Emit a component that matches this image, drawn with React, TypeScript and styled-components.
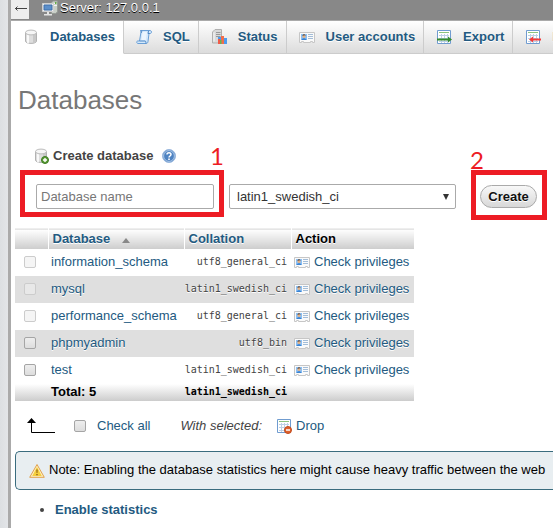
import React from "react";
import styled, { createGlobalStyle, css } from "styled-components";

const GlobalStyle = createGlobalStyle`
  * { box-sizing: border-box; }
  html, body { margin: 0; background: #fff; }
  body {
    font-family: "Liberation Sans", Arial, sans-serif;
    font-size: 13px;
    line-height: 16px;
    color: #444;
    overflow: hidden;
  }
  a { color: #235a81; text-decoration: none; }
  a:hover { text-decoration: underline; }
`;

const raised = css`
  text-shadow: 0 1px 0 #fff;
`;

const Page = styled.div`
  display: flex;
  min-height: 100vh;
`;

const NavPanel = styled.aside`
  flex: none;
  width: 11px;
  background: linear-gradient(to right, #dcdfe2, #e3e5e8);
  border-right: 3px solid #aaa;
`;

const Main = styled.main`
  flex: 1;
  min-width: 0;
  overflow: hidden;
`;

const ServerBar = styled.header`
  display: flex;
  align-items: flex-start;
  height: 20px;
  background: #888;
  color: #fff;
  text-shadow: 0 1px 0 #000;
`;

const BackButton = styled.button`
  width: 18px;
  height: 19px;
  margin-right: 13px;
  padding: 0 0 2px 2px;
  border: 0;
  background: #eee;
  line-height: 0;
`;

const ServerName = styled.span`
  display: flex;
  gap: 2px;
`;

const Tabs = styled.nav`
  display: flex;
  border-top: 1px solid #aaa;
`;

const Tab = styled.a<{ $active?: boolean }>`
  flex: none;
  display: flex;
  align-items: center;
  gap: 11px;
  height: 33px;
  padding: 0 8px 0 12px;
  border-right: 1px solid #ccc;
  border-bottom: 1px solid ${(p) => (p.$active ? "#fff" : "#ccc")};
  background: ${(p) => (p.$active ? "#fff" : "linear-gradient(#fff, #dcdcdc)")};
  font-weight: bold;
  white-space: nowrap;
  ${raised}
`;

const Title = styled.h1`
  margin: 30px 0 0 7px;
  font-size: 26px;
  line-height: 32px;
  font-weight: normal;
  color: #777;
  ${raised}
`;

const CreateForm = styled.form`
  margin: 32px 0 0 22px;
`;

const FormHeading = styled.div`
  display: flex;
  align-items: center;
  gap: 4px;
  height: 16px;
  font-weight: bold;
`;

const HeadingLabel = styled.label`
  margin-right: 4px;
`;

const HelpLink = styled.a`
  height: 16px;
`;

const FormRow = styled.div`
  display: flex;
  align-items: center;
  margin-top: 20px;
  padding-left: 3px;
`;

const Marked = styled.div`
  position: relative;
  display: flex;
`;

const Marker = styled.span<{ $wide?: boolean }>`
  position: absolute;
  inset: ${(p) => (p.$wide ? "-14px -10px -8px -16px" : "-15px -10px -12px -9px")};
  border: 5px solid #ed1c24;
  pointer-events: none;
`;

const MarkerNumber = styled.span<{ $wide?: boolean }>`
  position: absolute;
  ${(p) => (p.$wide ? "right: -10px; top: -42px;" : "left: -10px; top: -39px;")}
  font-family: Lato, sans-serif;
  font-size: 24px;
  line-height: 28px;
  color: #ed1c24;
  pointer-events: none;
`;

const NameInput = styled.input`
  width: 178px;
  height: 25px;
  padding: 0 4px;
  border: 1px solid #aaa;
  border-radius: 2px;
  background: #fff;
  font: inherit;
  color: #333;
  &::placeholder { color: #777; opacity: 1; }
`;

const SelectWrap = styled.div`
  display: grid;
  align-items: center;
  width: 227px;
  margin: 0 24px 0 15px;
`;

const CollationSelect = styled.select`
  grid-area: 1 / 1;
  height: 25px;
  padding: 0 7px;
  border: 1px solid #aaa;
  border-radius: 2px;
  appearance: none;
  background: #fff;
  font: inherit;
  color: #333;
`;

const SelectArrow = styled.svg`
  grid-area: 1 / 1;
  justify-self: end;
  margin-right: 7px;
  pointer-events: none;
`;

const CreateButton = styled.button`
  width: 57px;
  height: 23px;
  padding: 0;
  border: 1px solid #aaa;
  border-radius: 12px;
  background: linear-gradient(#f8f8f8, #d8d8d8);
  font: inherit;
  font-weight: bold;
  color: #111;
  ${raised}
`;

const DatabaseTable = styled.table`
  width: 399px;
  margin: 19px 0 0 4px;
  border-collapse: collapse;
  table-layout: fixed;
`;

const Col = styled.col<{ $width: number }>`
  width: ${(p) => p.$width}px;
`;

const HeadCell = styled.th`
  height: 20px;
  padding: 0 4px;
  border-top: 1px solid #eee;
  border-right: 1px solid #fff;
  background: linear-gradient(#fff, #ccc);
  color: #000;
  text-align: left;
  ${raised}
  &:last-child { border-right: 0; }
`;

const SortMark = styled.svg`
  margin-left: 8px;
`;

const codeText = css`
  padding: 0 4px 0 0;
  text-align: right;
  font-family: "DejaVu Sans Mono", Consolas, monospace;
  font-size: 10px;
`;

const Row = styled.tr`
  &:nth-child(even) { background: #dfdfdf; }
`;

const Cell = styled.td<{ $kind?: "check" | "code" | "action" }>`
  height: 27px;
  padding: 0 3px;
  white-space: nowrap;
  ${raised}
  ${(p) => p.$kind === "check" && "padding-left: 9px; line-height: 0;"}
  ${(p) => p.$kind === "code" && codeText}
`;

const ActionLink = styled.a`
  display: flex;
  align-items: center;
  gap: 4px;
`;

const TotalRow = styled.tr`
  background: linear-gradient(#fff, #ccc);
`;

const TotalCell = styled.th<{ $code?: boolean }>`
  height: 17px;
  padding: 0 3px;
  color: #000;
  text-align: left;
  white-space: nowrap;
  ${(p) => p.$code && codeText}
`;

const Check = styled.input`
  appearance: none;
  width: 12px;
  height: 12px;
  margin: 0;
  border: 1px solid #a5a5a5;
  border-radius: 2px;
  background: linear-gradient(#eee, #ddd);
  &:checked { background: #235a81; }
  &:disabled { border-color: #ccc; background: #eeeeee99; }
`;

const BulkActions = styled.div`
  display: flex;
  align-items: center;
  height: 20px;
  margin: 15px 0 0 16px;
`;

const CheckAll = styled.label`
  display: flex;
  align-items: center;
  gap: 11px;
  margin: 0 30px 0 19px;
  color: #235a81;
`;

const DropLink = styled.a`
  display: flex;
  align-items: center;
  gap: 4px;
  margin-left: 14px;
`;

const Notice = styled.div`
  display: flex;
  align-items: center;
  gap: 4px;
  height: 39px;
  margin: 15px 0 0 4px;
  padding-left: 13px;
  border: 1px solid #3a6c7e;
  border-right: 0;
  border-radius: 5px 0 0 5px;
  background: #e8eef1;
  color: #000;
  white-space: nowrap;
`;

const StatList = styled.ul`
  margin: 12px 0 0;
  padding-left: 44px;
  font-weight: bold;
`;

const IconSvg = styled.svg`
  flex: none;
  width: 16px;
  height: 16px;
`;

const Icon = ({ children }: { children: React.ReactNode }) => (
  <IconSvg viewBox="0 0 16 16" fill="none" aria-hidden="true">{children}</IconSvg>
);

const Cylinder = () => (
  <>
    <path d="M2.5 3.5v8.5c0 3.2 11 3.2 11 0V3.5" fill="#dedede" stroke="#b2b2b2" />
    <path d="M4 5v9l2 .5v-9z" fill="#fff" opacity=".8" />
    <path d="M10 5.500V14.300l3-1.300V4.500z" fill="#c8c8c8" />
    <ellipse cx="8" cy="3.500" rx="5.500" ry="2.400" fill="#f6f6f6" stroke="#bcbcbc" />
  </>
);

const DatabaseIcon = () => <Icon><Cylinder /></Icon>;

const NewDatabaseIcon = () => (
  <Icon>
    <Cylinder />
    <circle cx="12" cy="12" r="3.5" fill="#5b9b37" stroke="#3c7c20" />
    <path d="M12 10v4M10 12h4" stroke="#fff" strokeWidth="1.4" />
  </Icon>
);

const ServerIcon = () => (
  <Icon>
    <path d="M9.500 2.500l2-1.500h4v11l-2 1.500h-4z" fill="#c8cec7" stroke="#979c96" />
    <path d="M12 3.500h3M12 5.500h3" stroke="#f2f4f1" />
    <path d="M13 2h1.500v2H13z" fill="#60aa44" />
    <path d="M.5 3.500h11v8H.5z" fill="#efefef" stroke="#d0d0d0" />
    <path d="M2 5h8v5H2z" fill="#5c8fca" stroke="#3f6fa8" />
    <path d="M5 12h2v2h3v1.500H2V14h3z" fill="#e4e4e4" />
  </Icon>
);

const SqlIcon = () => (
  <Icon>
    <path d="M4.500 1.500h9.500c2 0 1.800 3 .3 3h-1.300l-1 8c-.2 1.500-1 2-2 2H2c-1.500 0-2-2.500 0-2.500h1.500L5 3z" fill="#d3e8fb" stroke="#6a9fd6" />
    <path d="M5 1.500c1 .5.8 2 0 2.500M3.500 12H9c1 0 1 2 1 2.500M13.500 4.500h-1.500l.5-2.500" stroke="#4c86c4" />
    <path d="M6.500 3h4.500l-1.200 8H5.500z" fill="#f1f8ff" opacity=".8" />
  </Icon>
);

const StatusIcon = () => (
  <Icon>
    <path d="M1.500 3l2.500-2.500h6.500v11L8 14H1.500z" fill="#dadada" stroke="#b0b0b0" />
    <path d="M5 3.500h4.500M5 5.500h4.500M5 7.500h4.500" stroke="#999" />
    <path d="M3 3.500v9" stroke="#f8f8f8" />
    <path d="M7 8h3v7H7z" fill="#4b9cf0" />
    <path d="M7 10h2v5H7z" fill="#f05b48" />
    <path d="M10 7h3v8h-3z" fill="#f26d4c" />
    <path d="M13 9h3v6h-3z" fill="#4b9cf0" />
    <path d="M9 11h1.500v4H9z" fill="#63b456" />
  </Icon>
);

const AccountIcon = () => (
  <Icon>
    <path d="M.5 3.500h15v10H13.500v-1h-2v1h-7v-1h-2v1H.5z" fill="#fafafa" stroke="#c6c6c6" />
    <path d="M2 5h6v6H2z" fill="#8cc0f4" />
    <circle cx="5" cy="7.500" r="1.500" fill="#e2b184" />
    <path d="M3.500 7c-.2-2.500 3.200-2.500 3 0L5.500 6.200z" fill="#6a4a34" />
    <path d="M2.500 11c.3-2.500 4.700-2.500 5 0z" fill="#3b83d2" />
    <path d="M9 5.500h5M9 7.500h5M9 9.500h5" stroke="#a3bdd8" />
  </Icon>
);

const Sheet = () => (
  <>
    <path d="M1.500 1.500h13v13h-13z" fill="#fff" stroke="#709cd0" />
    <path d="M3 3.500h10" stroke="#8cc47f" />
    <path d="M3 6.500h10M3 9.500h10M3 12.500h10M5.500 5v9M8.500 5v9M11.500 5v9" stroke="#bdd1e6" />
  </>
);

const ExportIcon = () => (
  <Icon>
    <Sheet />
    <path d="M1 9.500h11V7.500l4 3-4 3v-2H1z" fill="#348b2e" />
  </Icon>
);

const ImportIcon = () => (
  <Icon>
    <Sheet />
    <path d="M16 9.500H8V7.500l-4 3 4 3v-2h8z" fill="#f33a3a" />
  </Icon>
);

const DropIcon = () => (
  <Icon>
    <Sheet />
    <circle cx="12" cy="12" r="3.500" fill="#df622d" stroke="#c04a1c" />
    <path d="M10 12h4" stroke="#fff" strokeWidth="1.500" />
  </Icon>
);

const HelpIcon = () => (
  <Icon>
    <circle cx="8" cy="8" r="6.500" fill="#4e83c2" stroke="#9bb9df" />
    <circle cx="8" cy="8" r="5.400" stroke="#c3d7ef" strokeWidth=".8" />
    <path d="M6 6.500c0-2.500 4-2.300 4 0C10 8 8 8 8 9.500" stroke="#fff" strokeWidth="1.500" />
    <path d="M7.200 10.500h1.600v1.600H7.200z" fill="#fff" />
  </Icon>
);

const WarningIcon = () => (
  <Icon>
    <path d="M8 2.500L15.300 15.300H.7z" fill="#fdf0c4" stroke="#e0a14c" strokeLinejoin="round" />
    <path d="M8 5l4.800 9H3.200z" fill="#f5cf3d" />
    <path d="M7.200 7.500h1.600l-.3 3.500h-1zM7.200 12h1.600v1.300H7.200z" fill="#9a6f1c" />
  </Icon>
);

const tabs = [
  { label: "Databases", icon: <DatabaseIcon />, active: true },
  { label: "SQL", icon: <SqlIcon /> },
  { label: "Status", icon: <StatusIcon /> },
  { label: "User accounts", icon: <AccountIcon /> },
  { label: "Export", icon: <ExportIcon /> },
  { label: "Import", icon: <ImportIcon /> },
];

const databases = [
  { name: "information_schema", collation: "utf8_general_ci", system: true },
  { name: "mysql", collation: "latin1_swedish_ci", system: true },
  { name: "performance_schema", collation: "utf8_general_ci", system: true },
  { name: "phpmyadmin", collation: "utf8_bin", system: false },
  { name: "test", collation: "latin1_swedish_ci", system: false },
];

export default function App() {
  return (
    <Page>
      <GlobalStyle />
      <NavPanel />
      <Main>
        <ServerBar>
          <BackButton type="button" aria-label="Back">
            <svg width="14" height="9" viewBox="0 0 14 9" fill="none" stroke="#444">
              <path d="M1 4.500h12M3.500 2.500l-2 2 2 2" />
            </svg>
          </BackButton>
          <ServerName><ServerIcon />Server: 127.0.0.1</ServerName>
        </ServerBar>
        <Tabs>
          {tabs.map((t) => (
            <Tab key={t.label} href="#" $active={t.active}>{t.icon}{t.label}</Tab>
          ))}
        </Tabs>
        <Title>Databases</Title>
        <CreateForm onSubmit={(e) => e.preventDefault()}>
          <FormHeading>
            <NewDatabaseIcon />
            <HeadingLabel htmlFor="new-db">Create database</HeadingLabel>
            <HelpLink href="#" aria-label="Documentation"><HelpIcon /></HelpLink>
          </FormHeading>
          <FormRow>
            <Marked>
              <NameInput id="new-db" type="text" placeholder="Database name" />
              <Marker $wide />
              <MarkerNumber $wide>1</MarkerNumber>
            </Marked>
            <SelectWrap>
              <CollationSelect aria-label="Collation" defaultValue="latin1_swedish_ci">
                <option>latin1_swedish_ci</option>
                <option>utf8_general_ci</option>
                <option>utf8_bin</option>
              </CollationSelect>
              <SelectArrow width="6" height="6" viewBox="0 0 6 6"><path d="M0 0h6L3 6z" fill="#333" /></SelectArrow>
            </SelectWrap>
            <Marked>
              <CreateButton type="submit">Create</CreateButton>
              <Marker />
              <MarkerNumber>2</MarkerNumber>
            </Marked>
          </FormRow>
        </CreateForm>
        <DatabaseTable>
          <colgroup>
            <Col $width={33} /><Col $width={136} /><Col $width={107} /><Col $width={123} />
          </colgroup>
          <thead>
            <tr>
              <HeadCell />
              <HeadCell>
                <a href="#">Database <SortMark width="8" height="5" viewBox="0 0 8 5"><path d="M4 0l4 5H0z" fill="#888" /></SortMark></a>
              </HeadCell>
              <HeadCell><a href="#">Collation</a></HeadCell>
              <HeadCell>Action</HeadCell>
            </tr>
          </thead>
          <tbody>
            {databases.map((db) => (
              <Row key={db.name}>
                <Cell $kind="check"><Check type="checkbox" aria-label={db.name} disabled={db.system} /></Cell>
                <Cell><a href="#">{db.name}</a></Cell>
                <Cell $kind="code">{db.collation}</Cell>
                <Cell $kind="action"><ActionLink href="#"><AccountIcon />Check privileges</ActionLink></Cell>
              </Row>
            ))}
          </tbody>
          <tfoot>
            <TotalRow>
              <TotalCell />
              <TotalCell>Total: 5</TotalCell>
              <TotalCell $code>latin1_swedish_ci</TotalCell>
              <TotalCell />
            </TotalRow>
          </tfoot>
        </DatabaseTable>
        <BulkActions>
          <svg width="28" height="16" viewBox="0 0 28 16" aria-hidden="true">
            <path d="M4.500 3v11.500H28" fill="none" stroke="#000" />
            <path d="M4.500 0L9 5H0z" fill="#000" />
          </svg>
          <CheckAll><Check type="checkbox" />Check all</CheckAll>
          <em>With selected:</em>
          <DropLink href="#"><DropIcon />Drop</DropLink>
        </BulkActions>
        <Notice role="note">
          <WarningIcon />
          Note: Enabling the database statistics here might cause heavy traffic between the web
        </Notice>
        <StatList>
          <li><a href="#">Enable statistics</a></li>
        </StatList>
      </Main>
    </Page>
  );
}
